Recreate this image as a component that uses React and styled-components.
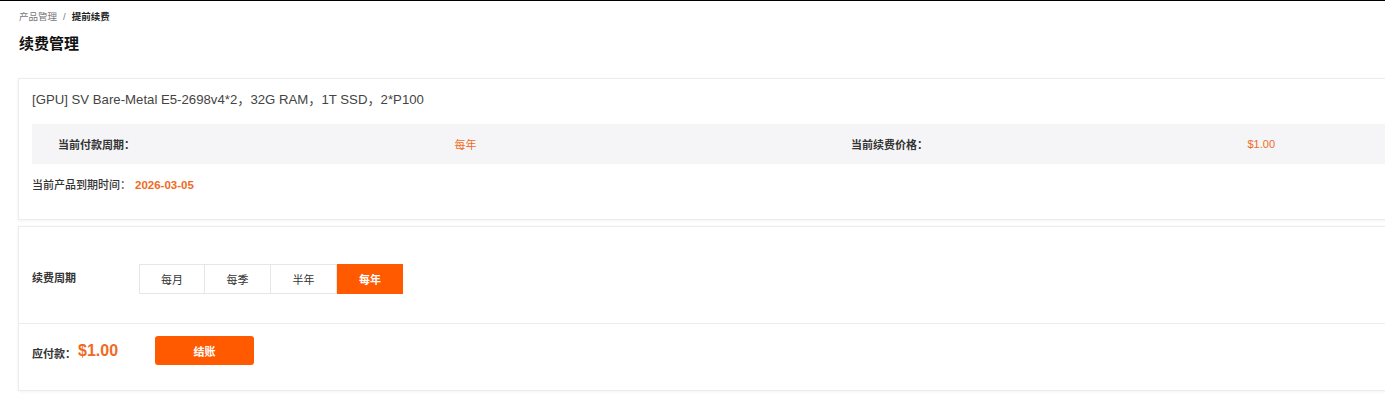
import styled, { createGlobalStyle } from "styled-components";

const GlobalStyle = createGlobalStyle`
  html, body {
    margin: 0;
    padding: 0;
    background: #fff;
    overflow: hidden;
  }
  body {
    font-family: "Liberation Sans", "Noto Sans CJK SC", sans-serif;
    color: #333;
  }
`;

const Page = styled.div`
  border-top: 1px solid #000;
  padding: 0 0 20px 18px;
  width: 1614px;
`;

const Breadcrumb = styled.div`
  display: flex;
  align-items: center;
  gap: 6px;
  padding: 10px 0 0 1px;
  font-size: 9.5px;
  line-height: 12px;
  color: #777;
`;

const Crumb = styled.span`
  color: ${(p) => (p.$current ? "#222" : "#777")};
  font-weight: ${(p) => (p.$current ? 700 : 400)};
`;

const Title = styled.h1`
  margin: 11px 0 24px 1px;
  font-size: 15px;
  line-height: 20px;
  font-weight: 700;
  color: #111;
`;

const Card = styled.section`
  background: #fff;
  border: 1px solid #ececec;
  box-shadow: 0 1px 3px rgba(0, 0, 0, 0.05);
  margin-bottom: 6px;
`;

const InfoBody = styled.div`
  padding: 11px 13px 24px;
`;

const ProductName = styled.div`
  font-size: 13.2px;
  line-height: 20px;
  color: #444;
`;

const Band = styled.div`
  display: grid;
  grid-template-columns: repeat(4, 1fr);
  align-items: center;
  height: 40px;
  margin-top: 14px;
  background: #f5f5f7;
`;

const BandCell = styled.div`
  padding-left: 26px;
  font-size: 11px;
  font-weight: ${(p) => (p.$value ? 400 : 600)};
  color: ${(p) => (p.$value ? "#f06a23" : "#333")};
`;

const Expire = styled.div`
  margin-top: 11px;
  font-size: 11px;
  line-height: 20px;
  font-weight: 500;
  color: #333;
`;

const Date = styled.span`
  color: #f06a23;
  font-weight: 700;
  font-size: 11.5px;
  margin-left: 4px;
`;

const CycleRow = styled.div`
  display: flex;
  align-items: center;
  padding: 37px 13px 29px;
  border-bottom: 1px solid #ececec;
`;

const RowLabel = styled.div`
  width: 107px;
  font-size: 11px;
  font-weight: 600;
  color: #333;
  margin-top: -4px;
`;

const Segments = styled.div`
  display: flex;
`;

const Segment = styled.button`
  width: 66px;
  height: 30px;
  border: 1px solid ${(p) => (p.$active ? "#ff5a00" : "#e6e6e6")};
  border-left-width: ${(p) => (p.$first || p.$active ? "1px" : "0")};
  background: ${(p) => (p.$active ? "#ff5a00" : "#fff")};
  color: ${(p) => (p.$active ? "#fff" : "#333")};
  font-family: "Noto Sans CJK SC", sans-serif;
  font-size: 11px;
  font-weight: ${(p) => (p.$active ? 700 : 400)};
  padding: 0;
  cursor: pointer;
`;

const PayRow = styled.div`
  display: flex;
  align-items: center;
  padding: 12px 13px 25px;
`;

const PayLabel = styled.span`
  font-size: 11px;
  font-weight: 700;
  color: #333;
  margin-top: 4px;
`;

const Amount = styled.span`
  font-size: 16px;
  font-weight: 700;
  color: #f06a23;
  margin-left: 2px;
  width: 77px;
`;

const CheckoutButton = styled.button`
  width: 99px;
  height: 29px;
  border: none;
  border-radius: 3px;
  background: #ff5a00;
  color: #fff;
  font-family: "Noto Sans CJK SC", sans-serif;
  font-size: 11px;
  font-weight: 700;
  cursor: pointer;
`;

const cycles = ["每月", "每季", "半年", "每年"];

export default function App() {
  return (
    <>
      <GlobalStyle />
      <Page>
        <Breadcrumb>
          <Crumb>产品管理</Crumb>
          <Crumb>/</Crumb>
          <Crumb $current>提前续费</Crumb>
        </Breadcrumb>
        <Title>续费管理</Title>

        <Card>
          <InfoBody>
            <ProductName>
              [GPU] SV Bare-Metal E5-2698v4*2，32G RAM，1T SSD，2*P100
            </ProductName>
            <Band>
              <BandCell>当前付款周期：</BandCell>
              <BandCell $value>每年</BandCell>
              <BandCell>当前续费价格：</BandCell>
              <BandCell $value>$1.00</BandCell>
            </Band>
            <Expire>
              当前产品到期时间：<Date>2026-03-05</Date>
            </Expire>
          </InfoBody>
        </Card>

        <Card>
          <CycleRow>
            <RowLabel>续费周期</RowLabel>
            <Segments>
              {cycles.map((c, i) => (
                <Segment key={c} $first={i === 0} $active={i === 3}>
                  {c}
                </Segment>
              ))}
            </Segments>
          </CycleRow>
          <PayRow>
            <PayLabel>应付款：</PayLabel>
            <Amount>$1.00</Amount>
            <CheckoutButton>结账</CheckoutButton>
          </PayRow>
        </Card>
      </Page>
    </>
  );
}
